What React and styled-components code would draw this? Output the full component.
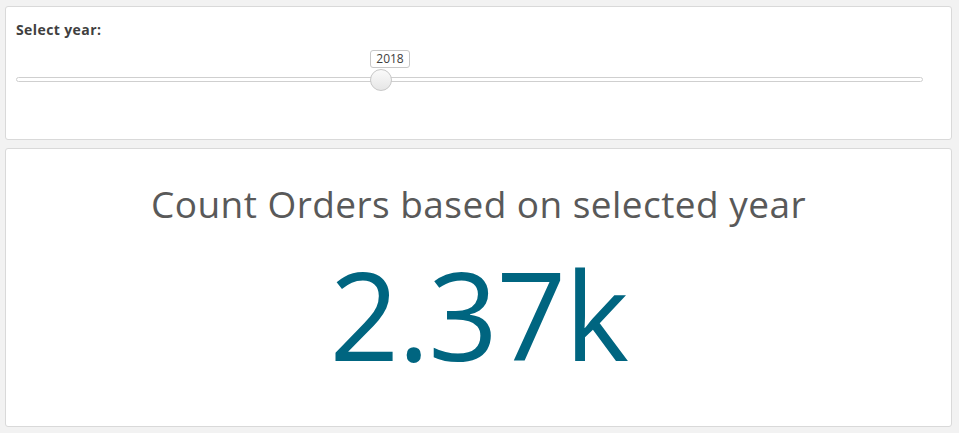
import React from 'react'
import styled, { createGlobalStyle } from 'styled-components'

const GlobalStyle = createGlobalStyle`
    html, body {
        margin: 0;
        padding: 0;
        background: #f2f2f2;
        font-family: 'Open Sans', 'Noto Sans', sans-serif;
    }
`

const Page = styled.div`
    display: flex;
    flex-direction: column;
    gap: 8px;
    padding: 6px 7px 6px 5px;
    height: 433px;
    box-sizing: border-box;
`
const Panel = styled.section`
    background: #ffffff;
    border: 1px solid #d9d9d9;
    border-radius: 3px;
    box-sizing: border-box;
    height: ${(p) => p.h}px;
    flex-shrink: 0;
`
const FilterPanel = styled(Panel)`
    padding: 14px 28px 0 10px;
`
const Label = styled.div`
    font-size: 14px;
    font-weight: 700;
    color: #404040;
    line-height: 18px;
    letter-spacing: 0.4px;
`
const SliderArea = styled.div`
    position: relative;
    height: 22px;
    margin-top: 30px;
`
const Track = styled.div`
    position: absolute;
    left: 0;
    right: 0;
    top: 8px;
    height: 5px;
    border: 1px solid #cfcfcf;
    border-radius: 3px;
    box-sizing: border-box;
    background: #fff;
`
const ThumbRail = styled.div`
    position: absolute;
    left: 11px;
    right: 11px;
    top: 0;
    height: 22px;
`
const Thumb = styled.div`
    position: absolute;
    top: 0;
    width: 22px;
    height: 22px;
    margin-left: -11px;
    border-radius: 50%;
    border: 1px solid #c8c8c8;
    box-sizing: border-box;
    background: linear-gradient(#fafafa, #e6e6e6);
`
const Bubble = styled.div`
    position: absolute;
    bottom: 23px;
    margin-left: -11px;
    width: 40px;
    height: 18px;
    box-sizing: border-box;
    text-align: center;
    font-size: 12px;
    line-height: 16px;
    color: #404040;
    background: #fff;
    border: 1px solid #c8c8c8;
    border-radius: 3px;
    white-space: nowrap;
`
const KpiPanel = styled(Panel)`
    display: flex;
    flex-direction: column;
    align-items: center;
    padding-top: 33px;
`
const KpiTitle = styled.div`
    font-size: 37px;
    line-height: 44px;
    color: #595959;
    letter-spacing: 0.45px;
`
const KpiValue = styled.div`
    margin-top: 23px;
    font-size: 122px;
    line-height: 130px;
    color: #006580;
    letter-spacing: -1.5px;
`

const YearSlider = ({ min, max, value }) => {
    const pct = ((value - min) / (max - min)) * 100
    return (
        <SliderArea>
            <Track />
            <ThumbRail>
                <Bubble style={{ left: `${pct}%` }}>{value}</Bubble>
                <Thumb style={{ left: `${pct}%` }} />
            </ThumbRail>
        </SliderArea>
    )
}

const App = () => (
    <>
        <GlobalStyle />
        <Page>
            <FilterPanel h={134}>
                <Label>Select year:</Label>
                <YearSlider min={2016} max={2021} value={2018} />
            </FilterPanel>
            <KpiPanel h={279}>
                <KpiTitle>Count Orders based on selected year</KpiTitle>
                <KpiValue>2.37k</KpiValue>
            </KpiPanel>
        </Page>
    </>
)
export default App
